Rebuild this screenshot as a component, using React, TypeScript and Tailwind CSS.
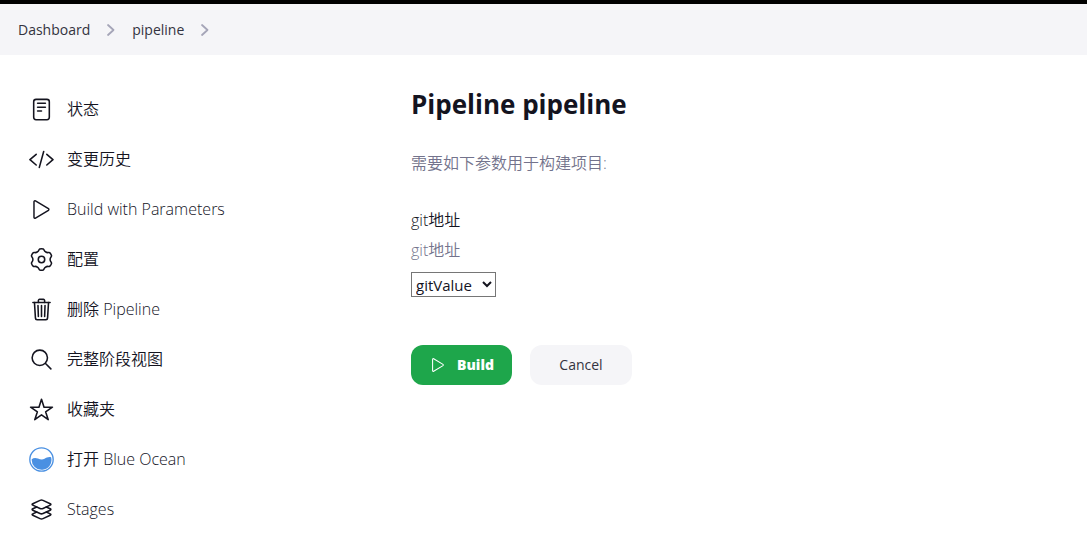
import type { ReactNode } from "react";
import { IoLayersOutline, IoReaderOutline, IoSearchOutline, IoStarOutline, IoTrashOutline } from "react-icons/io5";

function ChangesIcon() {
  return (
    <svg viewBox="0 0 24 24" className="size-[25px]" fill="none" stroke="currentColor" strokeWidth="1.5" strokeLinecap="round" strokeLinejoin="round" aria-hidden="true">
      <path d="M6.900 7 .9 12.200l6 5.100M17.100 7 23 12.200l-5.900 5.100M14.100 4.300 9.900 19.600" />
    </svg>
  );
}

function PlayIcon({ className }: { className: string }) {
  return (
    <svg viewBox="0 0 512 512" className={className} fill="none" stroke="currentColor" strokeWidth="30" strokeMiterlimit="10" aria-hidden="true">
      <path d="M102 98v316c0 17 17 28 31 20l265-161c12-8 12-26 0-34L133 78c-14-8-31 3-31 20z" />
    </svg>
  );
}

function polar(angle: number, radius: number) {
  const t = (angle * Math.PI) / 180;
  return `${(12 + radius * Math.sin(t)).toFixed(2)} ${(12 - radius * Math.cos(t)).toFixed(2)}`;
}

const gearPath =
  [0, 60, 120, 180, 240, 300]
    .map((a, i) =>
      [
        i === 0 ? `M${polar(a - 9, 10.3)}` : "",
        `Q${polar(a, 10.6)} ${polar(a + 9, 10.3)}`,
        `C${polar(a + 18, 9.8)} ${polar(a + 14, 8.4)} ${polar(a + 30, 8.3)}`,
        `C${polar(a + 46, 8.4)} ${polar(a + 42, 9.8)} ${polar(a + 51, 10.3)}`,
      ].join(" "),
    )
    .join(" ") + "Z";

function GearIcon() {
  return (
    <svg viewBox="0 0 24 24" className="size-[25px]" fill="none" stroke="currentColor" strokeWidth="1.5" strokeLinejoin="round" aria-hidden="true">
      <path d={gearPath} />
      <circle cx="12" cy="12" r="3.100" />
    </svg>
  );
}

function OceanIcon() {
  return (
    <svg viewBox="0 0 24 24" className="size-[25px]" aria-hidden="true">
      <circle cx="12" cy="12" r="11.200" fill="#fff" stroke="#4a90e2" strokeWidth="1.300" />
      <path d="M2.600 11.700c1.500-1.300 3.800-1.500 6-.6 2.100.9 4.200 1.500 6.300.2 2-1.400 4.300-2.200 6.300-1.500A9.500 9.500 0 1 1 2.600 11.700z" fill="#4a90e2" />
    </svg>
  );
}

const tasks: { label: string; icon: ReactNode }[] = [
  { label: "状态", icon: <IoReaderOutline className="size-[25px]" /> },
  { label: "变更历史", icon: <ChangesIcon /> },
  { label: "Build with Parameters", icon: <PlayIcon className="size-[25px]" /> },
  { label: "配置", icon: <GearIcon /> },
  { label: "删除 Pipeline", icon: <IoTrashOutline className="size-[25px]" /> },
  { label: "完整阶段视图", icon: <IoSearchOutline className="size-[25px]" /> },
  { label: "收藏夹", icon: <IoStarOutline className="size-[25px]" /> },
  { label: "打开 Blue Ocean", icon: <OceanIcon /> },
  { label: "Stages", icon: <IoLayersOutline className="size-[25px]" /> },
];

function Chevron() {
  return (
    <svg viewBox="0 0 12 14" className="h-3.5 w-3" fill="none" stroke="#a5a5b8" strokeWidth="1.800" strokeLinecap="round" strokeLinejoin="round" aria-hidden="true">
      <path d="m3 2 5.500 5-5.500 5" />
    </svg>
  );
}

export default function App() {
  return (
    <div className="min-h-screen bg-white font-['Open_Sans','Noto_Sans_CJK_SC',sans-serif] text-[#14141f]">
      <header className="border-t-4 border-black bg-[#f5f5f8]">
        <nav aria-label="Breadcrumb" className="flex h-[51px] items-center gap-[15px] px-[18px] text-sm text-[#333340]">
          <a href="#dashboard">Dashboard</a>
          <Chevron />
          <a href="#pipeline">pipeline</a>
          <Chevron />
        </nav>
      </header>
      <div className="flex">
        <aside className="w-[371px] shrink-0 px-[29px] pt-[29px]">
          <nav aria-label="Tasks">
            <ul>
              {tasks.map((task) => (
                <li key={task.label}>
                  <a href="#task" className="flex h-[50px] items-center gap-[13px]">
                    {task.icon}
                    <span className="font-[350]">{task.label}</span>
                  </a>
                </li>
              ))}
            </ul>
          </nav>
        </aside>
        <main className="min-w-0 flex-1 px-10 pt-[31px]">
          <h1 className="text-[26px] leading-9 font-bold">Pipeline pipeline</h1>
          <p className="mt-[29px] leading-6 font-[350] text-[#73738c]">需要如下参数用于构建项目:</p>
          <form className="mt-[33px]">
            <label htmlFor="git" className="block leading-6 font-[350]">git地址</label>
            <p className="mt-1.5 leading-6 font-[350] text-[#73738c]">git地址</p>
            <select id="git" className="mt-2.5 block h-[25px] w-[85px] border border-[#767676] bg-white text-[15px]">
              <option>gitValue</option>
            </select>
            <div className="mt-12 flex gap-[18px]">
              <button type="button" className="flex h-10 w-[101px] items-center justify-center gap-2.5 rounded-xl bg-[#1ea64b] text-sm font-extrabold text-white">
                <PlayIcon className="size-[18px]" />
                Build
              </button>
              <button type="button" className="h-10 w-[102px] rounded-xl bg-[#f5f5f8] text-sm text-[#333340]">Cancel</button>
            </div>
          </form>
        </main>
      </div>
    </div>
  );
}
